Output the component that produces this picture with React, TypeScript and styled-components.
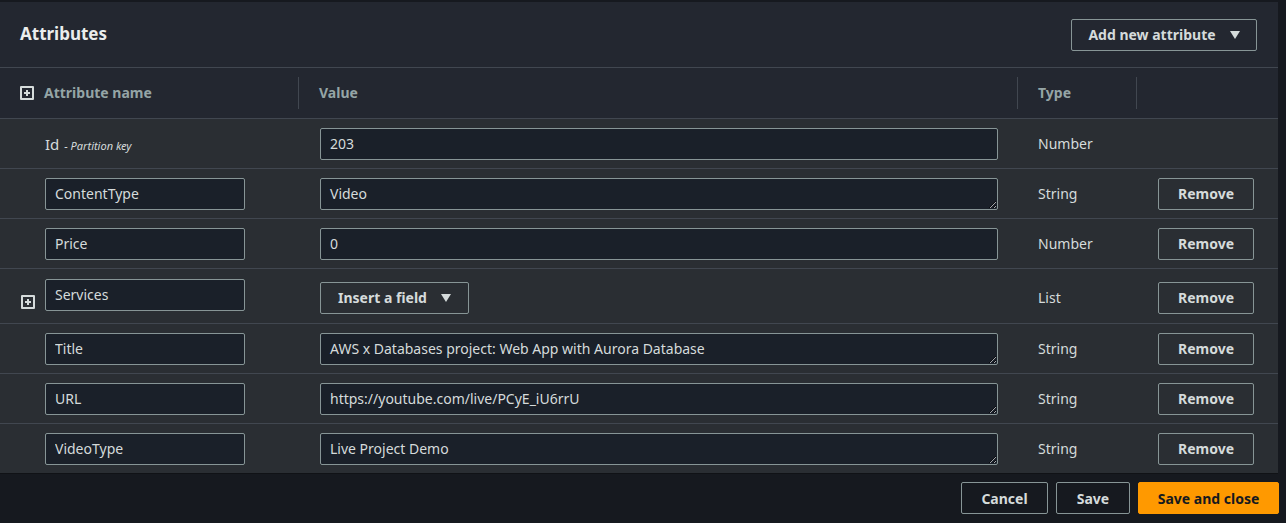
import React from "react"
import styled, { createGlobalStyle } from "styled-components"

const GlobalStyle = createGlobalStyle`
  html, body {
    margin: 0;
    padding: 0;
    background: #16191f;
  }
  body {
    font-family: "Noto Sans", "Open Sans", sans-serif;
    font-size: 14px;
    color: #d5dbdb;
  }
`

const Pagina = styled.div`
  width: 1286px;
  height: 523px;
  background: #16191f;
  padding-top: 2px;
  box-sizing: border-box;
  overflow: hidden;
`

const Panel = styled.section`
  width: 1278px;
  background: #2a2e33;
  border-bottom: 1px solid #101216;
`

const Cabecera = styled.header`
  display: flex;
  align-items: center;
  justify-content: space-between;
  height: 65px;
  padding: 0 21px 0 20px;
  background: #232730;
  border-bottom: 1px solid #414750;
`

const Titulo = styled.h2`
  margin: 0;
  font-size: 17px;
  font-weight: 700;
  color: #eaeded;
  padding-bottom: 2px;
`

const Boton = styled.button<{ $primario?: boolean; $ancho?: number; $fondo?: string }>`
  display: inline-flex;
  align-items: center;
  justify-content: center;
  gap: 10px;
  width: ${(p) => (p.$ancho ? `${p.$ancho}px` : "auto")};
  height: 32px;
  padding: 0 12px;
  box-sizing: border-box;
  border: 1px solid ${(p) => (p.$primario ? "#ff9900" : "#879596")};
  border-radius: 2px;
  background: ${(p) => (p.$primario ? "#ff9900" : p.$fondo || "#2a2e33")};
  color: ${(p) => (p.$primario ? "#16191f" : "#d5dbdb")};
  font-family: inherit;
  font-size: 14px;
  font-weight: 700;
  white-space: nowrap;
  cursor: pointer;
`

const Triangulo = styled.span`
  width: 0;
  height: 0;
  border-left: 5px solid transparent;
  border-right: 5px solid transparent;
  border-top: 8px solid #d5dbdb;
  margin-left: 4px;
`

const Fila = styled.div<{ $alto?: boolean }>`
  display: grid;
  grid-template-columns: 299px 719px 119px 141px;
  align-items: center;
  height: ${(p) => (p.$alto ? "54px" : "49px")};
  border-bottom: 1px solid #414750;
  box-sizing: content-box;
  &:last-child {
    border-bottom: none;
  }
`

const FilaEncabezado = styled(Fila)`
  height: 50px;
  background: #232730;
`

const CeldaEncabezado = styled.div<{ $linea?: boolean }>`
  display: flex;
  align-items: center;
  height: 31px;
  padding-left: 20px;
  padding-bottom: 1px;
  border-right: ${(p) => (p.$linea ? "1px solid #414750" : "none")};
  color: #95a5a6;
  font-weight: 700;
  font-size: 14px;
`

const CeldaNombre = styled.div`
  display: flex;
  align-items: center;
  padding-left: 21px;
`

const Hueco = styled.span<{ $bajar?: boolean }>`
  display: inline-flex;
  width: 24px;
  flex: none;
  margin-top: ${(p) => (p.$bajar ? "11px" : "0")};
`

const IconoMas = styled.span`
  position: relative;
  width: 14px;
  height: 14px;
  box-sizing: border-box;
  border: 2px solid #d5dbdb;
  border-radius: 1px;
  &::before,
  &::after {
    content: "";
    position: absolute;
    background: #d5dbdb;
    left: 50%;
    top: 50%;
    transform: translate(-50%, -50%);
  }
  &::before {
    width: 6px;
    height: 2px;
  }
  &::after {
    width: 2px;
    height: 6px;
  }
`

const CeldaValor = styled.div`
  padding-left: 21px;
  padding-right: 20px;
  display: flex;
`

const CeldaTipo = styled.div<{ $bajar?: boolean }>`
  padding-left: 20px;
  padding-top: ${(p) => (p.$bajar ? "3px" : "0")};
  color: #d5dbdb;
`

const CeldaAccion = styled.div<{ $bajar?: boolean }>`
  padding-left: 21px;
  padding-top: ${(p) => (p.$bajar ? "3px" : "0")};
  display: flex;
`

const Entrada = styled.input<{ $ancho?: string; $subir?: boolean }>`
  width: ${(p) => p.$ancho || "100%"};
  height: 32px;
  box-sizing: border-box;
  padding: 0 9px;
  margin-top: ${(p) => (p.$subir ? "-3px" : "0")};
  background: #1a2029;
  border: 1px solid #879596;
  border-radius: 2px;
  color: #d5dbdb;
  font-family: inherit;
  font-size: 14px;
  outline: none;
`

const AreaTexto = styled.textarea`
  width: 100%;
  height: 32px;
  box-sizing: border-box;
  padding: 5px 9px;
  background: #1a2029;
  border: 1px solid #879596;
  border-radius: 2px;
  color: #d5dbdb;
  font-family: inherit;
  font-size: 14px;
  line-height: 20px;
  resize: vertical;
  overflow: hidden;
  white-space: nowrap;
  outline: none;
`

const Clave = styled.span`
  color: #d5dbdb;
  font-size: 15px;
  margin-left: 24px;
`

const Nota = styled.em`
  font-size: 11px;
  margin-left: 5px;
`

const BotonCampo = styled(Boton)`
  margin-top: 3px;
`

const Pie = styled.footer`
  display: flex;
  justify-content: flex-end;
  gap: 8px;
  width: 1279px;
  padding-top: 8px;
`

type Atributo = {
  nombre: string
  valor: string
  tipo: string
  texto?: boolean
}

const atributos: Atributo[] = [
  { nombre: "ContentType", valor: "Video", tipo: "String", texto: true },
  { nombre: "Price", valor: "0", tipo: "Number" },
  { nombre: "Services", valor: "", tipo: "List" },
  { nombre: "Title", valor: "AWS x Databases project: Web App with Aurora Database", tipo: "String", texto: true },
  { nombre: "URL", valor: "https://youtube.com/live/PCyE_iU6rrU", tipo: "String", texto: true },
  { nombre: "VideoType", valor: "Live Project Demo", tipo: "String", texto: true },
]

const App = () => {
  return (
    <Pagina>
      <GlobalStyle />
      <Panel>
        <Cabecera>
          <Titulo>Attributes</Titulo>
          <Boton $ancho={186} $fondo="#232730">
            Add new attribute <Triangulo />
          </Boton>
        </Cabecera>
        <FilaEncabezado>
          <CeldaEncabezado $linea>
            <Hueco>
              <IconoMas />
            </Hueco>
            Attribute name
          </CeldaEncabezado>
          <CeldaEncabezado $linea>Value</CeldaEncabezado>
          <CeldaEncabezado $linea>Type</CeldaEncabezado>
          <CeldaEncabezado />
        </FilaEncabezado>
        <Fila>
          <CeldaNombre>
            <Clave>
              Id<Nota>- Partition key</Nota>
            </Clave>
          </CeldaNombre>
          <CeldaValor>
            <Entrada defaultValue="203" />
          </CeldaValor>
          <CeldaTipo>Number</CeldaTipo>
          <CeldaAccion />
        </Fila>
        {atributos.map((a) => {
          const lista = a.tipo === "List"
          return (
            <Fila key={a.nombre} $alto={lista}>
              <CeldaNombre>
                <Hueco $bajar={lista}>{lista && <IconoMas />}</Hueco>
                <Entrada $ancho="200px" $subir={lista} defaultValue={a.nombre} />
              </CeldaNombre>
              <CeldaValor>
                {lista ? (
                  <BotonCampo $ancho={149}>
                    Insert a field <Triangulo />
                  </BotonCampo>
                ) : a.texto ? (
                  <AreaTexto defaultValue={a.valor} rows={1} />
                ) : (
                  <Entrada defaultValue={a.valor} />
                )}
              </CeldaValor>
              <CeldaTipo $bajar={lista}>{a.tipo}</CeldaTipo>
              <CeldaAccion $bajar={lista}>
                <Boton $ancho={96}>Remove</Boton>
              </CeldaAccion>
            </Fila>
          )
        })}
      </Panel>
      <Pie>
        <Boton $ancho={87} $fondo="#16191f">
          Cancel
        </Boton>
        <Boton $ancho={74} $fondo="#16191f">
          Save
        </Boton>
        <Boton $primario $ancho={141}>
          Save and close
        </Boton>
      </Pie>
    </Pagina>
  )
}

export default App
